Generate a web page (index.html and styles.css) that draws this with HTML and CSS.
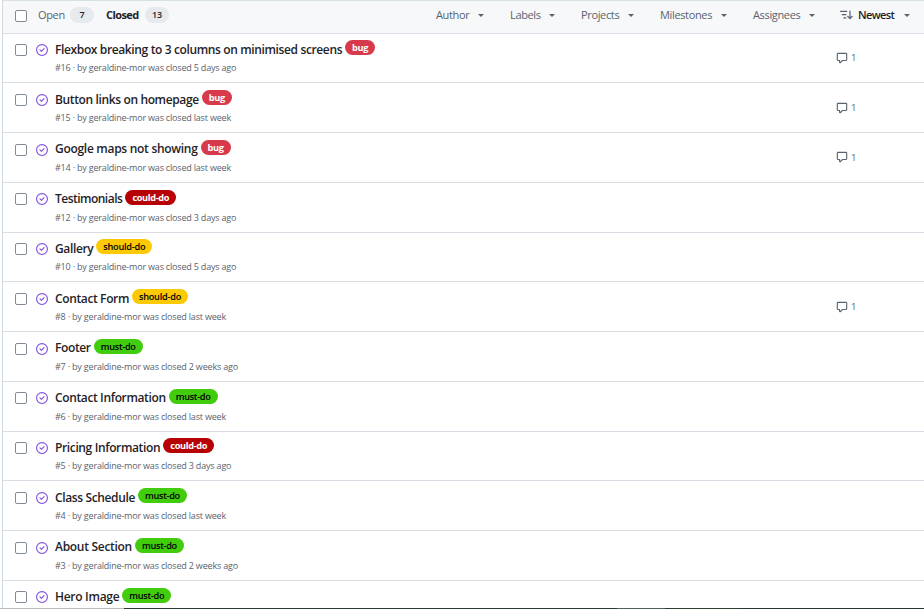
FILE: index.html
```html
<!DOCTYPE html>
<html lang="en">
<head>
<meta charset="utf-8">
<title>Issues</title>
<link rel="stylesheet" href="styles.css">
</head>
<body>
<svg width="0" height="0" class="defs">
<symbol id="closed" viewBox="0 0 16 16"><path d="M11.28 6.78a.75.75 0 0 0-1.06-1.06L7.25 8.69 5.78 7.22a.75.75 0 0 0-1.06 1.06l2 2a.75.75 0 0 0 1.06 0l3.5-3.5Z"/><path d="M16 8A8 8 0 1 1 0 8a8 8 0 0 1 16 0Zm-1.5 0a6.5 6.5 0 1 0-13 0 6.5 6.5 0 0 0 13 0Z"/></symbol>
<symbol id="comment" viewBox="0 0 16 16"><path d="M1 2.75C1 1.784 1.784 1 2.75 1h10.5c.966 0 1.75.784 1.75 1.75v7.5A1.75 1.75 0 0 1 13.25 12H9.06l-2.573 2.573A1.458 1.458 0 0 1 4 13.543V12H2.75A1.75 1.75 0 0 1 1 10.25Zm1.75-.25a.25.25 0 0 0-.25.25v7.5c0 .138.112.25.25.25h2a.75.75 0 0 1 .75.75v2.19l2.72-2.72a.749.749 0 0 1 .53-.22h4.5a.25.25 0 0 0 .25-.25v-7.5a.25.25 0 0 0-.25-.25Z"/></symbol>
<symbol id="sort" viewBox="0 0 16 16"><path d="M0 4.25a.75.75 0 0 1 .75-.75h7.5a.75.75 0 0 1 0 1.5H.75A.75.75 0 0 1 0 4.250Zm2 4a.75.75 0 0 1 .75-.75h4.500a.75.75 0 0 1 0 1.500h-4.500A.75.75 0 0 1 2 8.250Zm2 4a.75.75 0 0 1 .75-.75h2.500a.75.75 0 0 1 0 1.500h-2.500a.75.75 0 0 1-.75-.75Zm9-1.060V3.750a.75.75 0 0 0-1.500 0v7.440L10.030 9.720a.75.75 0 0 0-1.060 1.060l2.750 2.750a.75.75 0 0 0 1.060 0l2.750-2.750a.75.75 0 0 0-1.060-1.060Z"/></symbol>
</svg>
<main class="list">
<header class="bar">
<span class="check"></span>
<a class="tab">Open</a><span class="count">7</span>
<a class="tab active">Closed</a><span class="count">13</span>
<nav class="filters">
<span class="filter author">Author<i></i></span>
<span class="filter labels">Labels<i></i></span>
<span class="filter projects">Projects<i></i></span>
<span class="filter milestones">Milestones<i></i></span>
<span class="filter assignees">Assignees<i></i></span>
<span class="filter newest"><svg><use href="#sort"/></svg>Newest<i></i></span>
</nav>
</header>
<article class="row"><span class="check"></span><svg class="state"><use href="#closed"/></svg><div class="body"><div class="line"><h3>Flexbox breaking to 3 columns on minimised screens</h3><span class="label bug">bug</span></div><p>#16 · by geraldine-mor was closed 5 days ago</p></div><span class="comments"><svg><use href="#comment"/></svg>1</span></article>
<article class="row"><span class="check"></span><svg class="state"><use href="#closed"/></svg><div class="body"><div class="line"><h3>Button links on homepage</h3><span class="label bug">bug</span></div><p>#15 · by geraldine-mor was closed last week</p></div><span class="comments"><svg><use href="#comment"/></svg>1</span></article>
<article class="row"><span class="check"></span><svg class="state"><use href="#closed"/></svg><div class="body"><div class="line"><h3 class="loose">Google maps not showing</h3><span class="label bug">bug</span></div><p>#14 · by geraldine-mor was closed last week</p></div><span class="comments"><svg><use href="#comment"/></svg>1</span></article>
<article class="row"><span class="check"></span><svg class="state"><use href="#closed"/></svg><div class="body"><div class="line"><h3 class="tight">Testimonials</h3><span class="label could">could-do</span></div><p>#12 · by geraldine-mor was closed 3 days ago</p></div></article>
<article class="row"><span class="check"></span><svg class="state"><use href="#closed"/></svg><div class="body"><div class="line"><h3>Gallery</h3><span class="label should">should-do</span></div><p>#10 · by geraldine-mor was closed 5 days ago</p></div></article>
<article class="row"><span class="check"></span><svg class="state"><use href="#closed"/></svg><div class="body"><div class="line"><h3>Contact Form</h3><span class="label should">should-do</span></div><p>#8 · by geraldine-mor was closed last week</p></div><span class="comments"><svg><use href="#comment"/></svg>1</span></article>
<article class="row"><span class="check"></span><svg class="state"><use href="#closed"/></svg><div class="body"><div class="line"><h3>Footer</h3><span class="label must">must-do</span></div><p>#7 · by geraldine-mor was closed 2 weeks ago</p></div></article>
<article class="row"><span class="check"></span><svg class="state"><use href="#closed"/></svg><div class="body"><div class="line"><h3>Contact Information</h3><span class="label must">must-do</span></div><p>#6 · by geraldine-mor was closed last week</p></div></article>
<article class="row"><span class="check"></span><svg class="state"><use href="#closed"/></svg><div class="body"><div class="line"><h3>Pricing Information</h3><span class="label could">could-do</span></div><p>#5 · by geraldine-mor was closed 3 days ago</p></div></article>
<article class="row"><span class="check"></span><svg class="state"><use href="#closed"/></svg><div class="body"><div class="line"><h3>Class Schedule</h3><span class="label must">must-do</span></div><p>#4 · by geraldine-mor was closed last week</p></div></article>
<article class="row"><span class="check"></span><svg class="state"><use href="#closed"/></svg><div class="body"><div class="line"><h3 class="loose">About Section</h3><span class="label must">must-do</span></div><p>#3 · by geraldine-mor was closed 2 weeks ago</p></div></article>
<article class="row"><span class="check"></span><svg class="state"><use href="#closed"/></svg><div class="body"><div class="line"><h3 class="loose">Hero Image</h3><span class="label must">must-do</span></div></div></article>
</main>
<div class="edge"></div>
</body>
</html>
```
FILE: styles.css
```css
* { box-sizing: border-box; }
body {
  margin: 0;
  height: 609px;
  overflow: hidden;
  background: #fff;
  color: #1f2328;
  font-family: "Open Sans", "Noto Sans", sans-serif;
}
.defs { position: absolute; }
svg { fill: currentColor; flex: none; }
.list {
  height: 608px;
  margin-left: 2px;
  overflow: hidden;
  border-left: 1px solid #d1d9e0;
  border-top: 1px solid #d5e2e0;
}
.bar {
  height: 31.6px;
  display: flex;
  align-items: center;
  padding: 0 12px 4px;
  background: #f6f8fa;
  font-size: 11px;
  color: #59636e;
}
.check {
  flex: none;
  width: 12px;
  height: 12px;
  border: 1px solid #818b98;
  border-radius: 2px;
  background: #fff;
}
.bar .check { margin-top: 2px; }
.tab { width: 26px; margin-left: 11px; letter-spacing: -0.35px; white-space: nowrap; }
.tab.active { width: 34px; margin-left: 12px; color: #1f2328; font-weight: 700; letter-spacing: -0.6px; }
.count {
  height: 16px;
  width: 24px;
  margin-left: 6px;
  border-radius: 8px;
  background: #e7eaed;
  color: #1f2328;
  font-size: 9px;
  font-weight: 600;
  line-height: 16px;
  letter-spacing: -0.2px;
  text-align: center;
}
.tab.active + .count { margin-left: 5px; }
.filters { display: flex; margin-left: auto; margin-right: 2px; }
.filter {
  display: flex;
  align-items: center;
  justify-content: space-between;
  font-weight: 500;
  letter-spacing: -0.35px;
  white-space: nowrap;
}
.filter i {
  border: 3px solid transparent;
  border-top-color: #59636e;
  border-bottom: 0;
  margin-top: 1px;
}
.author { width: 48px; }
.labels { width: 45px; margin-left: 26px; }
.projects { width: 53px; margin-left: 26px; }
.milestones { width: 67px; margin-left: 26px; }
.assignees { width: 62px; margin-left: 26px; }
.newest { width: 70px; margin-left: 25px; color: #1f2328; font-weight: 600; letter-spacing: -0.6px; }
.newest svg { width: 13px; height: 13px; color: #59636e; margin-right: 5px; }
.newest i { margin-left: auto; }
.row {
  display: flex;
  height: 49.75px;
  padding-left: 12px;
  border-top: 1px solid #d8dee4;
}
.row .check { margin-top: 10.5px; }
.state { width: 12px; height: 12px; margin: 10.5px 0 0 9px; color: #8250df; }
.body { margin-left: 7px; width: 782px; }
.line { display: flex; height: 27.8px; }
h3 {
  margin: 7.2px 3px 0 0;
  font-size: 12px;
  font-weight: 600;
  line-height: 18px;
  letter-spacing: -0.37px;
  white-space: nowrap;
}
.loose { letter-spacing: -0.29px; }
.tight { letter-spacing: -0.52px; }
p {
  margin: 0;
  color: #59636e;
  font-size: 9px;
  line-height: 13px;
  letter-spacing: -0.19px;
}
.label {
  height: 15px;
  margin-top: 6.7px;
  border-radius: 8px;
  font-size: 9.2px;
  font-weight: 700;
  line-height: 15px;
  letter-spacing: -0.35px;
  text-align: center;
  white-space: nowrap;
}
.bug { width: 30px; background: #d73a4a; color: #fff; }
.could { width: 51px; background: #b60205; color: #fff; }
.should { width: 56px; background: #fbca04; color: #000; font-weight: 600; letter-spacing: -0.25px; }
.must { width: 49px; background: #42cc0e; color: #000; font-weight: 600; letter-spacing: -0.3px; }
.comments {
  display: flex;
  align-items: center;
  gap: 3px;
  height: 14px;
  margin: 17.4px 0 0 -1px;
  color: #59636e;
  font-size: 9.5px;
}
.comments svg { width: 12px; height: 12px; }
.edge {
  height: 1px;
  background: linear-gradient(90deg, #b8bab9 0 124px, #263b32 124px 617px, #536056 617px 665px, #2c4030 665px 740px, #283636 740px);
}
```
